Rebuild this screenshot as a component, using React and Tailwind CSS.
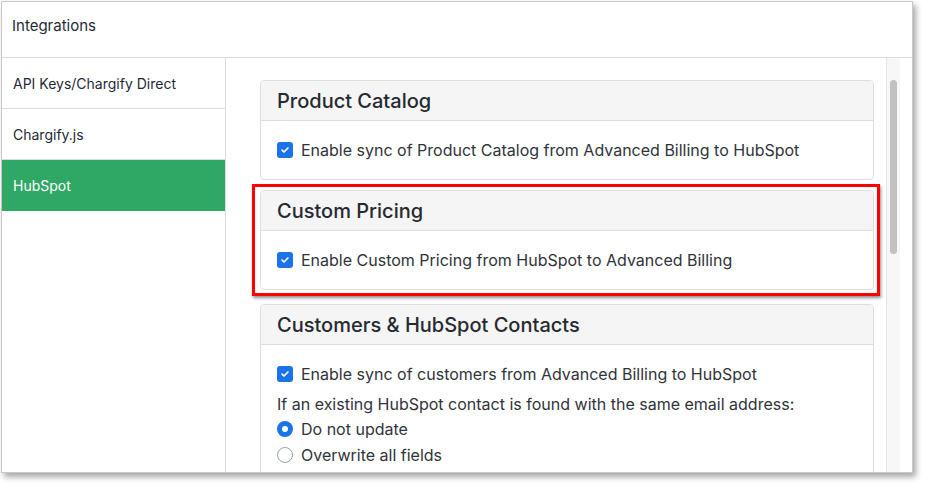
import React from 'react';

const Check = () => (
  <span className="flex items-center justify-center w-4 h-4 rounded-[3px] bg-[#1a73e8] shrink-0">
    <svg viewBox="0 0 12 12" className="w-2.5 h-2.5" fill="none" stroke="white" strokeWidth="2" strokeLinecap="round" strokeLinejoin="round">
      <path d="M2.5 6.2l2.3 2.2 4.7-4.8" />
    </svg>
  </span>
);

const Radio = ({ on }) => (
  <span className={`w-4 h-4 rounded-full shrink-0 ${on ? 'border-[5px] border-[#1a73e8] bg-white' : 'border border-gray-400 bg-white'}`} />
);

const Card = ({ title, children }) => (
  <div className="shrink-0 border border-[#dedede] rounded-[4px] bg-white overflow-hidden">
    <div className="h-[40px] flex items-center px-4 bg-[#f5f5f5] border-b border-[#dedede] text-[20px] font-medium text-[#262a30]">{title}</div>
    <div className="px-4 py-[14px] text-[16px] leading-[24px] text-[#30343a]">{children}</div>
  </div>
);

export default function App() {
  const items = ['API Keys/Chargify Direct', 'Chargify.js', 'HubSpot'];
  return (
    <div className="w-[929px] h-[489px] bg-white overflow-hidden pt-px pl-px" style={{ fontFamily: 'Inter, "Noto Sans", sans-serif' }}>
      <div className="w-[912px] h-[472px] bg-white border border-[#c8c8c8] shadow-[3px_4px_6px_rgba(0,0,0,0.35)] flex flex-col overflow-hidden">
        <div className="h-[56px] shrink-0 flex items-center pb-[6px] px-[10px] border-b border-[#dcdcdc] text-[15px] text-[#1f2a37]">Integrations</div>
        <div className="flex flex-1 min-h-0">
          <div className="w-[224px] shrink-0 border-r border-[#dcdcdc]">
            {items.map((it, i) => (
              <div key={it} className={`h-[51px] flex items-center px-[11px] text-[14px] ${i === 2 ? 'bg-[#2fa866] text-white' : 'text-[#1f2a37] border-b border-[#dcdcdc]'}`}>{it}</div>
            ))}
          </div>
          <div className="flex-1 flex min-w-0">
            <div className="flex-1 min-h-0 overflow-hidden pl-[34px] pr-[12px] pt-[22px] flex flex-col">
              <Card title="Product Catalog">
                <div className="flex items-center gap-2 py-[3px]"><Check />Enable sync of Product Catalog from Advanced Billing to HubSpot</div>
              </Card>
              <div className="shrink-0 mt-[4px] -ml-[8px] -mr-[6px] border-[3px] border-[#f00] pl-[5px] pr-[3px] pt-[3px] pb-[3px] shadow-[1px_2px_3px_rgba(0,0,0,0.45)]">
                <Card title="Custom Pricing">
                  <div className="flex items-center gap-2 py-[3px]"><Check />Enable Custom Pricing from HubSpot to Advanced Billing</div>
                </Card>
              </div>
              <div className="shrink-0 mt-[8px]">
                <Card title="Customers & HubSpot Contacts">
                  <div className="flex items-center gap-2 py-[3px]"><Check />Enable sync of customers from Advanced Billing to HubSpot</div>
                  <div className="mt-[3px]">If an existing HubSpot contact is found with the same email address:</div>
                  <div className="flex items-center gap-2 mt-[1px]"><Radio on />Do not update</div>
                  <div className="flex items-center gap-2 mt-[2px]"><Radio />Overwrite all fields</div>
                </Card>
              </div>
            </div>
            <div className="w-[14px] mr-[12px] bg-[#f7f7f7] border-l border-[#e6e6e6] flex justify-center pt-[22px]">
              <div className="w-[7px] h-[174px] rounded-full bg-[#c1c1c1]" />
            </div>
          </div>
        </div>
      </div>
    </div>
  );
}
